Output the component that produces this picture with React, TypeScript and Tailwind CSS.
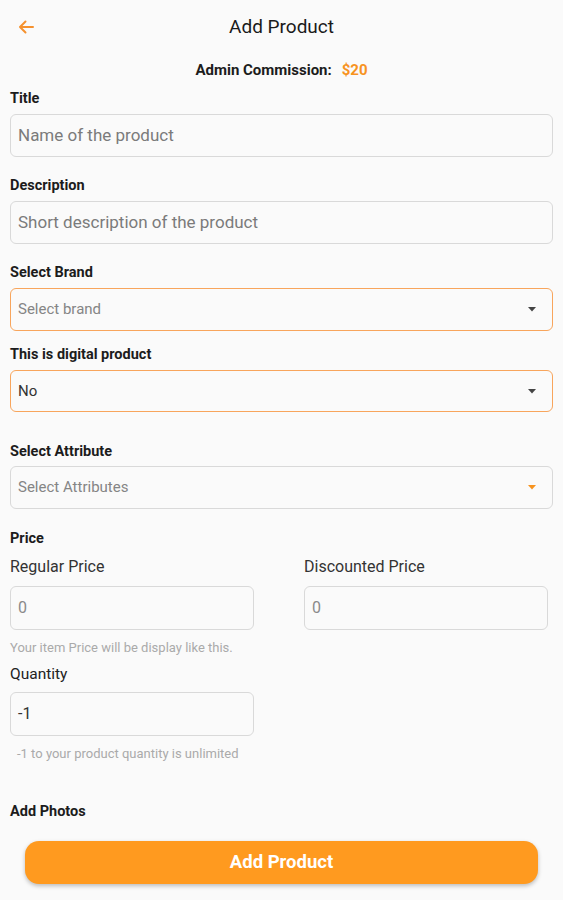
import React from "react";

const Caret = ({ color }: { color: string }) => (
  <svg width="8" height="5" viewBox="0 0 8 5" className="mr-[16px]">
    <path d="M0 0 L8 0 L4 4.5 Z" fill={color} />
  </svg>
);

const Label = ({ children, className = "" }: { children: React.ReactNode; className?: string }) => (
  <div className={`text-[14.5px] leading-[16px] font-bold text-[#1c1c1c] ${className}`}>{children}</div>
);

export default function App() {
  return (
    <div
      className="w-[563px] h-[900px] bg-[#fafafa] overflow-hidden"
      style={{ fontFamily: "Roboto, 'Noto Sans', Arial, sans-serif" }}
    >
      <div className="relative h-[54px] flex items-center justify-center">
        <div className="absolute left-[17px] top-[18px]">
          <svg width="18" height="18" viewBox="0 0 18 18" fill="none">
            <path d="M16 9 H3 M8.5 3.5 L3 9 L8.5 14.5" stroke="#F5912E" strokeWidth="2" strokeLinecap="round" strokeLinejoin="round" />
          </svg>
        </div>
        <div className="text-[19px] leading-[22px] text-[#1a1a1a]">Add Product</div>
      </div>

      <div className="mt-[8px] flex justify-center text-[15px] leading-[16px] font-bold">
        <span className="text-[#1c1c1c]">Admin Commission:</span>
        <span className="ml-[10px] text-[#F7931E]">$20</span>
      </div>

      <div className="px-[10px]">
        <Label className="mt-[13px]">Title</Label>
        <div className="mt-[7px] h-[43px] rounded-[6px] border border-[#d9d9d9] bg-[#fafafa] flex items-center px-[7px] text-[17px] text-[#7b7b7b]">
          Name of the product
        </div>

        <Label className="mt-[21px]">Description</Label>
        <div className="mt-[7px] h-[43px] rounded-[6px] border border-[#d9d9d9] bg-[#fafafa] flex items-center px-[7px] text-[17px] text-[#7b7b7b]">
          Short description of the product
        </div>

        <Label className="mt-[21px]">Select Brand</Label>
        <div className="mt-[7px] h-[43px] rounded-[6px] border-[1.5px] border-[#F8A55C] bg-[#fafafa] flex items-center justify-between pl-[7px] text-[15px] text-[#858585]">
          <span>Select brand</span>
          <Caret color="#444" />
        </div>

        <Label className="mt-[16px]">This is digital product</Label>
        <div className="mt-[7px] h-[42px] rounded-[6px] border-[1.5px] border-[#F8A55C] bg-[#fafafa] flex items-center justify-between pl-[7px] text-[15px] text-[#333]">
          <span>No</span>
          <Caret color="#444" />
        </div>

        <Label className="mt-[32px]">Select Attribute</Label>
        <div className="mt-[6px] h-[43px] rounded-[6px] border border-[#d9d9d9] bg-[#fafafa] flex items-center justify-between pl-[7px] text-[15px] text-[#858585]">
          <span>Select Attributes</span>
          <Caret color="#F7931E" />
        </div>

        <Label className="mt-[22px]">Price</Label>

        <div className="mt-[11px] flex gap-[50px]">
          <div className="w-[244px]">
            <div className="text-[16px] leading-[18px] text-[#333]">Regular Price</div>
            <div className="mt-[10px] h-[44px] rounded-[6px] border border-[#d9d9d9] flex items-center px-[7px] text-[16px] text-[#8a8a8a]">0</div>
          </div>
          <div className="w-[244px]">
            <div className="text-[16px] leading-[18px] text-[#333]">Discounted Price</div>
            <div className="mt-[10px] h-[44px] rounded-[6px] border border-[#d9d9d9] flex items-center px-[7px] text-[16px] text-[#8a8a8a]">0</div>
          </div>
        </div>

        <div className="mt-[11px] text-[13px] leading-[14px] text-[#aaaaaa]">Your item Price will be display like this.</div>

        <div className="mt-[10px] text-[15.5px] leading-[18px] text-[#222]">Quantity</div>
        <div className="mt-[9px] w-[244px] h-[44px] rounded-[6px] border border-[#d9d9d9] flex items-center px-[7px] text-[16px] text-[#333]">-1</div>

        <div className="mt-[11px] pl-[7px] text-[13px] leading-[14px] text-[#aaaaaa]">-1 to your product quantity is unlimited</div>

        <Label className="mt-[43px]">Add Photos</Label>
      </div>

      <div className="mt-[21px] px-[25px]">
        <div className="h-[43px] rounded-[14px] bg-[#FF9A1F] shadow-[0_2px_4px_rgba(0,0,0,0.25)] flex items-center justify-center text-white text-[18.5px] font-bold">
          Add Product
        </div>
      </div>
    </div>
  );
}
